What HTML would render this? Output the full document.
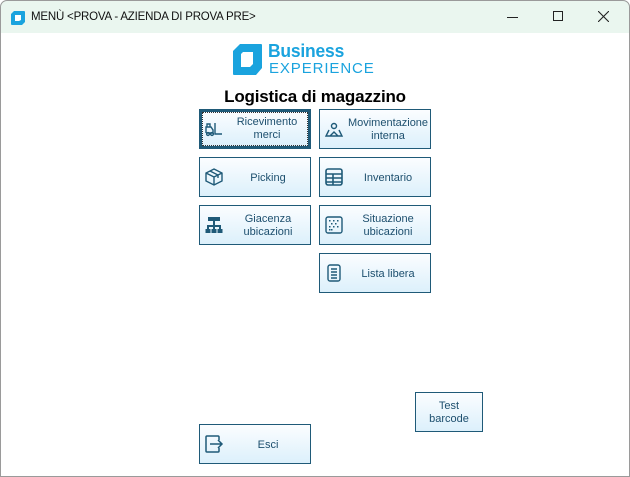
<!DOCTYPE html>
<html><head><meta charset="utf-8"><style>
*{margin:0;padding:0;box-sizing:border-box}
body{width:630px;height:477px;overflow:hidden;background:#fff;font-family:"Liberation Sans",sans-serif;position:relative}
.frame{position:absolute;left:0;top:0;width:630px;height:477px;border:1px solid #9a9a9a;border-radius:7px 7px 0 0;pointer-events:none;z-index:5}
.tb{position:absolute;left:0;top:0;width:630px;height:33px;background:#eaf6ef;border-radius:7px 7px 0 0}
.tt{position:absolute;left:31px;top:11px;font-size:11.5px;color:#111;letter-spacing:-0.2px}
.btn{position:absolute;width:112px;height:40px;border:1px solid #1f5a78;background:linear-gradient(#fbfdff,#dcf0fb);color:#1d4f6e;font-size:11px;line-height:13px}
.btn .ic{position:absolute;left:4px;top:9px;width:20px;height:20px}
.btn .lb{position:absolute;left:26px;right:0;top:2px;bottom:0;display:flex;align-items:center;justify-content:center;text-align:center}
.sel{border:3px solid #1f5a78}
.sel .lb{top:0}
.sel::after{content:"";position:absolute;left:0;top:0;right:0;bottom:0;border:1px dotted #333}
</style></head><body>
<div class="tb">
<svg style="position:absolute;left:10px;top:10px" width="16" height="16" viewBox="0 0 16 16"><path d="M4 1H14Q15 1 15 2V12L12 15H2Q1 15 1 14V4Z" fill="#1aa3de"/><path d="M5 5H11V10L9 11H5Z" fill="#fff"/></svg>
<div class="tt">MENÙ &lt;PROVA - AZIENDA DI PROVA PRE&gt;</div>
<div style="position:absolute;left:507px;top:17px;width:11px;height:1px;background:#222"></div>
<div style="position:absolute;left:553px;top:11px;width:10px;height:10px;border:1px solid #222"></div>
<svg style="position:absolute;left:598px;top:11px" width="11" height="11"><path d="M0 0L11 11M11 0L0 11" stroke="#222" stroke-width="1.1"/></svg>
</div>
<svg style="position:absolute;left:233px;top:44px" width="29" height="31" viewBox="0 0 29 31"><path d="M7 0H28Q29 0 29 1V24L23 31H1Q0 31 0 30V7Z" fill="#1aa3de"/><path d="M10 8H20V20L17 23H8V10Z" fill="#fff"/></svg>
<div style="position:absolute;left:268px;top:41px;font-weight:bold;font-size:18px;color:#1aa3de;letter-spacing:-0.2px;transform:scaleX(0.97);transform-origin:left">Business</div>
<div style="position:absolute;left:269px;top:60px;font-size:15px;color:#1aa3de;letter-spacing:0.9px">EXPERIENCE</div>
<div style="position:absolute;left:0;width:630px;top:87px;text-align:center;font-weight:bold;font-size:17px;color:#000;letter-spacing:-0.2px">Logistica di magazzino</div>

<div class="btn sel" style="left:199px;top:109px"><svg class="ic" style="left:2px;top:7px" viewBox="0 0 20 20" fill="none" stroke="#1f5a78" stroke-width="1.4"><path d="M2 14V8H7L9 11V14H2M11 4V15H18M3 8V5H6V8"/><circle cx="4" cy="15" r="1.4"/><circle cx="8" cy="15" r="1.4"/></svg><div class="lb" style="left:24px">Ricevimento<br>merci</div></div>
<div class="btn" style="left:319px;top:109px"><svg class="ic" viewBox="0 0 20 20" fill="none" stroke="#1f5a78" stroke-width="1.4"><circle cx="10" cy="7" r="2.5"/><path d="M5 11L2 17H18L15 11M6 17L10 13L14 17"/></svg><div class="lb">Movimentazione<br>interna</div></div>
<div class="btn" style="left:199px;top:157px"><svg class="ic" viewBox="0 0 20 20" fill="none" stroke="#1f5a78" stroke-width="1.4"><path d="M10 2L18 6V14L10 18L2 14V6ZM2 6L10 10L18 6M10 10V18M6 4L14 8V11"/></svg><div class="lb">Picking</div></div>
<div class="btn" style="left:319px;top:157px"><svg class="ic" viewBox="0 0 20 20" fill="none" stroke="#1f5a78" stroke-width="1.6"><rect x="2" y="2" width="16" height="16" rx="2"/><path d="M2 7H18M2 11H18M2 15H18M9 7V18" /></svg><div class="lb">Inventario</div></div>
<div class="btn" style="left:199px;top:205px"><svg class="ic" viewBox="0 0 20 20" fill="#1f5a78"><rect x="4" y="2" width="12" height="4"/><rect x="9" y="6" width="2" height="5"/><rect x="3" y="10" width="14" height="2"/><rect x="3" y="11" width="2" height="4"/><rect x="9" y="11" width="2" height="4"/><rect x="15" y="11" width="2" height="4"/><rect x="1.5" y="14" width="5" height="4"/><rect x="7.5" y="14" width="5" height="4"/><rect x="13.5" y="14" width="5" height="4"/></svg><div class="lb">Giacenza<br>ubicazioni</div></div>
<div class="btn" style="left:319px;top:205px"><svg class="ic" viewBox="0 0 20 20" fill="#1f5a78"><rect x="2" y="2" width="16" height="16" rx="2" fill="none" stroke="#1f5a78" stroke-width="1.4"/><g><rect x="5" y="5" width="1.5" height="1.5"/><rect x="9" y="5" width="1.5" height="1.5"/><rect x="13" y="5" width="1.5" height="1.5"/><rect x="7" y="8" width="1.5" height="1.5"/><rect x="11" y="8" width="1.5" height="1.5"/><rect x="5" y="11" width="1.5" height="1.5"/><rect x="9" y="11" width="1.5" height="1.5"/><rect x="13" y="11" width="1.5" height="1.5"/><rect x="5" y="14" width="1.5" height="1.5"/><rect x="7" y="14" width="1.5" height="1.5"/></g></svg><div class="lb">Situazione<br>ubicazioni</div></div>
<div class="btn" style="left:319px;top:253px"><svg class="ic" viewBox="0 0 20 20" fill="none" stroke="#1f5a78" stroke-width="1.4"><rect x="4" y="2" width="12" height="16" rx="2"/><path d="M7 6H13M7 9H13M7 12H13M7 15H13"/></svg><div class="lb">Lista libera</div></div>
<div class="btn" style="left:415px;top:392px;width:68px"><div class="lb" style="left:0">Test<br>barcode</div></div>
<div class="btn" style="left:199px;top:424px"><svg class="ic" viewBox="0 0 20 20" fill="none" stroke="#1f5a78" stroke-width="1.5"><path d="M15 6V3Q15 2 14 2H3Q2 2 2 3V17Q2 18 3 18H14Q15 18 15 17V14M6 10H18M14 6L18 10L14 14"/></svg><div class="lb">Esci</div></div>
<div class="frame"></div>
</body></html>
